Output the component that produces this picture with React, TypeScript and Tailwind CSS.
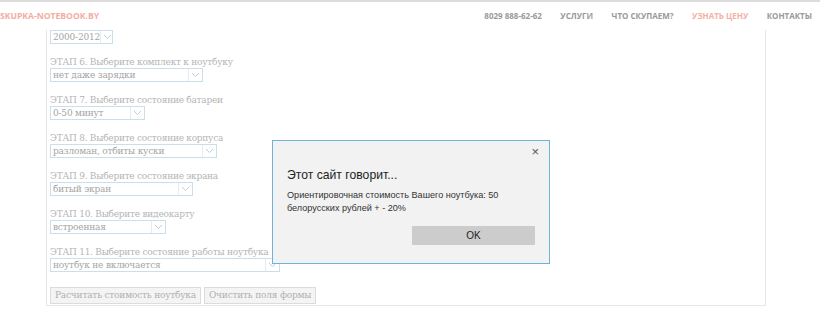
import React from "react";

const Chevron = () => (
  <svg width="9" height="6" viewBox="0 0 9 6" className="shrink-0">
    <path d="M1 1 L4.5 4.5 L8 1" fill="none" stroke="#c0ced7" strokeWidth="1" />
  </svg>
);

function Select({ value, w }: { value: string; w: number }) {
  return (
    <div
      className="flex items-center justify-between h-[14px] border border-[#c9dfe9] bg-white pl-[2px] pr-[2px] text-[9px] tracking-[-0.2px] leading-none text-[#a5a5a5] whitespace-nowrap"
      style={{ width: w }}
    >
      <span>{value}</span>
      <div className="flex items-center h-full pl-[2px] border-l border-[#e3edf2]">
        <Chevron />
      </div>
    </div>
  );
}

function Group({ label, value, w }: { label: string; value: string; w: number }) {
  return (
    <div className="flex flex-col mt-[12px]">
      <div className="text-[9px] tracking-[-0.25px] leading-[12px] text-[#b5b5b5] whitespace-nowrap">{label}</div>
      <Select value={value} w={w} />
    </div>
  );
}

export default function App() {
  return (
    <div className="relative w-[820px] h-[324px] overflow-hidden bg-white">
      <div className="h-[2px] bg-[#dcdcdc]" />
      <header
        className="h-[28px] flex items-center justify-between pr-[8px]"
        style={{ fontFamily: "'Open Sans', sans-serif" }}
      >
        <div className="text-[8.6px] font-bold text-[#f3aea3]">SKUPKA-NOTEBOOK.BY</div>
        <nav className="flex items-center gap-[18.5px] text-[8px] font-bold text-[#9a9a9a]">
          <span>8029 888-62-62</span>
          <span>УСЛУГИ</span>
          <span>ЧТО СКУПАЕМ?</span>
          <span className="text-[#f4b1a6]">УЗНАТЬ ЦЕНУ</span>
          <span>КОНТАКТЫ</span>
        </nav>
      </header>
      <main
        className="ml-[46px] w-[720px] h-[276px] border-l border-r border-b border-[#e6e6e6] pl-[3px]"
        style={{ fontFamily: "'DejaVu Serif', 'Liberation Serif', serif" }}
      >
        <Select value="2000-2012" w={63} />
        <Group label="ЭТАП 6. Выберите комплект к ноутбуку" value="нет даже зарядки" w={153} />
        <Group label="ЭТАП 7. Выберите состояние батареи" value="0-50 минут" w={95} />
        <Group label="ЭТАП 8. Выберите состояние корпуса" value="разломан, отбиты куски" w={167} />
        <Group label="ЭТАП 9. Выберите состояние экрана" value="битый экран" w={143} />
        <Group label="ЭТАП 10. Выберите видеокарту" value="встроенная" w={116} />
        <Group label="ЭТАП 11. Выберите состояние работы ноутбука" value="ноутбук не включается" w={230} />
        <div className="flex gap-[3px] mt-[15px]">
          <button className="h-[17px] px-[4px] border border-[#dcdcdc] bg-[#f4f4f4] text-[9px] tracking-[-0.2px] leading-none text-[#b0b0b0] whitespace-nowrap">
            Расчитать стоимость ноутбука
          </button>
          <button className="h-[17px] px-[4px] border border-[#dcdcdc] bg-[#f4f4f4] text-[9px] tracking-[-0.2px] leading-none text-[#b0b0b0] whitespace-nowrap">
            Очистить поля формы
          </button>
        </div>
      </main>

      <div
        className="absolute left-[272px] top-[140px] w-[278px] h-[124px] border border-[#6fb3d9] bg-[#f2f2f2] text-[#222]"
        style={{ fontFamily: "'Liberation Sans', Arial, sans-serif" }}
      >
        <div className="absolute right-[10px] top-[4px] text-[13px] text-[#555] leading-none">×</div>
        <div className="pl-[14px] pt-[28px] text-[12.2px] leading-none">Этот сайт говорит...</div>
        <div className="pl-[14px] pt-[8px] pr-[40px] text-[9.1px] leading-[13px] text-[#333]">
          Ориентировочная стоимость Вашего ноутбука: 50 белорусских рублей + - 20%
        </div>
        <div className="flex justify-end pr-[14px] mt-[11px]">
          <div className="w-[123px] h-[19px] bg-[#cccccc] flex items-center justify-center text-[10px] text-[#222]">
            OK
          </div>
        </div>
      </div>
    </div>
  );
}
